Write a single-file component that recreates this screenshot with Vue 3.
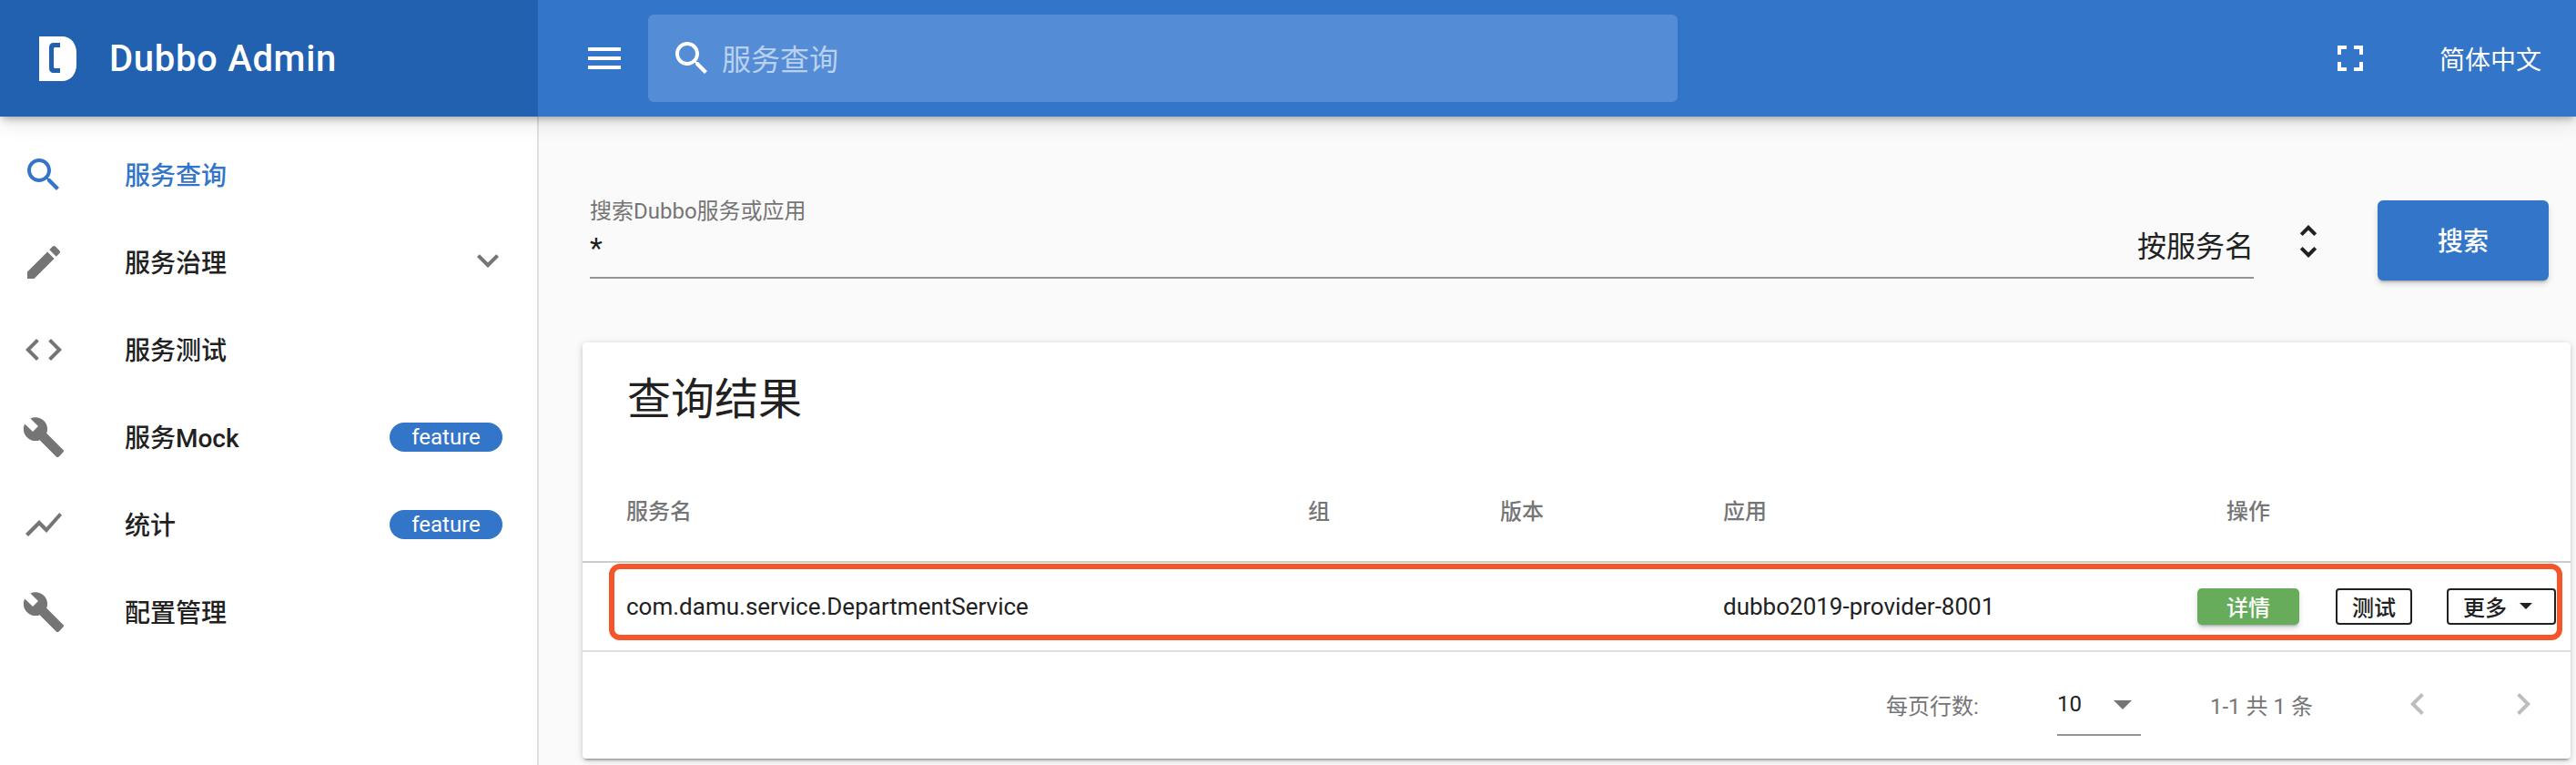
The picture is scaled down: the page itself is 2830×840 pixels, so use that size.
<script setup>
const icons = {
  search: 'M15.5 14h-.79l-.28-.27C15.41 12.59 16 11.11 16 9.5 16 5.91 13.09 3 9.5 3S3 5.91 3 9.5 5.91 16 9.5 16c1.61 0 3.09-.59 4.23-1.57l.27.28v.79l5 4.99L20.49 19l-4.99-5zm-6 0C7.01 14 5 11.99 5 9.5S7.01 5 9.5 5 14 7.01 14 9.5 11.99 14 9.5 14z',
  edit: 'M3 17.25V21h3.75L17.81 9.94l-3.75-3.75L3 17.25zM20.71 7.04c.39-.39.39-1.02 0-1.41l-2.34-2.34c-.39-.39-1.02-.39-1.41 0l-1.83 1.83 3.75 3.75 1.83-1.83z',
  code: 'M9.4 16.6L4.8 12l4.6-4.6L8 6l-6 6 6 6 1.4-1.4zm5.2 0l4.6-4.6-4.6-4.6L16 6l6 6-6 6-1.4-1.4z',
  build: 'M22.7 19l-9.1-9.1c.9-2.3.4-5-1.5-6.9-2-2-5-2.4-7.4-1.3L9 6 6 9 1.6 4.7C.4 7.1.9 10.1 2.9 12.1c1.9 1.9 4.6 2.4 6.9 1.5l9.1 9.1c.4.4 1 .4 1.4 0l2.3-2.3c.5-.4.5-1.1.1-1.4z',
  chart: 'M3.5 18.49l6-6.01 4 4L22 6.92l-1.41-1.41-7.09 7.97-4-4L2 16.99z',
  more: 'M16.59 8.59L12 13.17 7.41 8.59 6 10l6 6 6-6z',
  menu: 'M3 18h18v-2H3v2zm0-5h18v-2H3v2zm0-7v2h18V6H3z',
  full: 'M7 14H5v5h5v-2H7v-3zm-2-4h2V7h3V5H5v5zm12 7h-3v2h5v-5h-2v3zM14 5v2h3v3h2V5h-5z',
  unfold: 'M12 5.83L15.17 9l1.41-1.41L12 3 7.41 7.59 8.83 9 12 5.83zm0 12.34L8.83 15l-1.41 1.41L12 21l4.59-4.59L15.17 15 12 18.17z',
  left: 'M15.41 7.41L14 6l-6 6 6 6 1.41-1.41L10.83 12z',
  right: 'M10 6L8.59 7.41 13.17 12l-4.58 4.59L10 18l6-6z',
  drop: 'M7 10l5 5 5-5z'
}
const items = [
  { icon: 'search', label: '服务查询', active: true },
  { icon: 'edit', label: '服务治理', expand: true },
  { icon: 'code', label: '服务测试' },
  { icon: 'build', label: '服务Mock', badge: 'feature' },
  { icon: 'chart', label: '统计', badge: 'feature' },
  { icon: 'build', label: '配置管理' }
]
</script>

<template>
  <div class="page">
    <header class="topbar">
      <div class="brand">
        <svg class="logo" width="41" height="49" viewBox="0 0 41 49">
          <path d="M0 0H25C35 0 41 8 41 18V31C41 41 35 49 25 49H0Z" fill="#fff" />
          <path d="M23 7H16C12 7 11 9.500 11 13V34C11 37.500 12 40 16 40H23V35H18C16.500 35 16 34.500 16 33V14C16 12.500 16.500 12 18 12H23Z" fill="#2260b0" />
        </svg>
        <span class="brand-name">Dubbo Admin</span>
      </div>
      <svg class="icon menu-icon" viewBox="0 0 24 24"><path :d="icons.menu" /></svg>
      <div class="top-search">
        <svg class="icon" viewBox="0 0 24 24"><path :d="icons.search" /></svg>
        <span class="top-search-text">服务查询</span>
      </div>
      <div class="top-right">
        <svg class="icon" viewBox="0 0 24 24"><path :d="icons.full" /></svg>
        <span class="lang">简体中文</span>
      </div>
    </header>

    <div class="body">
      <nav class="sidebar">
        <div v-for="item in items" :key="item.label + item.icon" class="nav-item" :class="{ active: item.active }">
          <svg class="icon" viewBox="0 0 24 24"><path :d="icons[item.icon]" /></svg>
          <span class="nav-label">{{ item.label }}</span>
          <svg v-if="item.expand" class="icon nav-expand" viewBox="0 0 24 24"><path :d="icons.more" /></svg>
          <span v-if="item.badge" class="badge">{{ item.badge }}</span>
        </div>
      </nav>

      <main class="main">
        <section class="search-row">
          <div class="field">
            <div class="field-label">搜索Dubbo服务或应用</div>
            <div class="field-line">
              <span class="field-value">*</span>
              <span class="field-select">按服务名</span>
            </div>
          </div>
          <svg class="icon unfold" viewBox="0 0 24 24"><path :d="icons.unfold" /></svg>
          <button class="search-btn">搜索</button>
        </section>

        <section class="card">
          <h2 class="card-title">查询结果</h2>
          <div class="grid thead">
            <span>服务名</span>
            <span>组</span>
            <span>版本</span>
            <span>应用</span>
            <span class="th-action">操作</span>
          </div>
          <div class="grid trow">
            <span>com.damu.service.DepartmentService</span>
            <span></span>
            <span></span>
            <span>dubbo2019-provider-8001</span>
            <div class="actions">
              <button class="btn-detail">详情</button>
              <button class="btn-outline btn-test">测试</button>
              <button class="btn-outline btn-more">更多<i class="caret"></i></button>
            </div>
            <div class="highlight"></div>
          </div>
          <div class="tfoot">
            <span class="per-page">每页行数:</span>
            <div class="page-select">
              <span>10</span>
              <svg class="icon" viewBox="0 0 24 24"><path :d="icons.drop" /></svg>
            </div>
            <span class="range">1-1 共 1 条</span>
            <svg class="icon pager-left" viewBox="0 0 24 24"><path :d="icons.left" /></svg>
            <svg class="icon pager-right" viewBox="0 0 24 24"><path :d="icons.right" /></svg>
          </div>
        </section>
      </main>
    </div>
  </div>
</template>

<style>
html, body { margin: 0; padding: 0; background: #fafafa; }
</style>

<style scoped>
.page {
  width: 2830px;
  height: 840px;
  overflow: hidden;
  display: flex;
  flex-direction: column;
  background: #fafafa;
  font-family: Roboto, "Noto Sans CJK SC", sans-serif;
  color: #212121;
}
.icon { width: 48px; height: 48px; flex: none; display: block; fill: currentColor; }

.topbar {
  height: 128px;
  flex: none;
  display: flex;
  align-items: center;
  background: #3375c9;
  color: #fff;
  position: relative;
  z-index: 2;
  box-shadow: 0 4px 8px -2px rgba(0,0,0,.3), 0 8px 20px 0 rgba(0,0,0,.1);
}
.brand {
  width: 591px;
  height: 128px;
  flex: none;
  display: flex;
  align-items: center;
  padding-left: 43px;
  box-sizing: border-box;
  background: #2260b0;
}
.logo { flex: none; }
.brand-name { margin-left: 36px; font-size: 40px; font-weight: 500; letter-spacing: .7px; white-space: nowrap; }
.menu-icon { margin-left: 49px; }
.top-search {
  margin-left: 24px;
  width: 1131px;
  height: 96px;
  border-radius: 6px;
  background: #548dd6;
  display: flex;
  align-items: center;
  padding-left: 24px;
  box-sizing: border-box;
}
.top-search-text { margin: 0 0 3px 9px; font-size: 32px; color: rgba(255,255,255,.6); }
.top-right { margin-left: auto; display: flex; align-items: center; padding-right: 38px; }
.lang { margin-left: 74px; font-size: 28px; }

.body { flex: 1; display: flex; min-height: 0; }
.sidebar {
  width: 592px;
  flex: none;
  box-sizing: border-box;
  background: #fff;
  border-right: 2px solid #e0e0e0;
  padding-top: 16px;
}
.nav-item {
  height: 96px;
  display: flex;
  align-items: center;
  padding-left: 24px;
  color: #757575;
}
.nav-item.active { color: #3375c9; }
.nav-label { margin: 0 0 3px 65px; font-size: 28px; font-weight: 500; color: #212121; white-space: nowrap; }
.nav-item.active .nav-label { color: #3375c9; }
.nav-expand { margin-left: auto; margin-right: 30px; margin-top: -4px; }
.badge {
  margin-left: auto;
  margin-right: 38px;
  width: 124px;
  height: 32px;
  border-radius: 16px;
  background: #3375c9;
  color: #fff;
  font-size: 24px;
  line-height: 32px;
  text-align: center;
}

.main { flex: 1; min-width: 0; }
.search-row {
  display: flex;
  align-items: flex-start;
  padding: 92px 30px 0 56px;
}
.field { width: 1828px; flex: none; height: 84px; border-bottom: 2px solid #949494; display: flex; flex-direction: column; }
.field-label { font-size: 24px; line-height: 24px; color: #757575; white-space: nowrap; }
.field-line { display: flex; justify-content: space-between; align-items: center; margin-top: 8px; height: 40px; }
.field-value { font-size: 32px; line-height: 40px; }
.field-select { font-size: 32px; line-height: 40px; margin-bottom: 3px; }
.unfold { margin-left: 36px; margin-top: 21px; color: #212121; }
.search-btn {
  margin-left: auto;
  width: 188px;
  height: 88px;
  border: none;
  border-radius: 6px;
  background: #3375c9;
  color: #fff;
  font: 500 28px Roboto, "Noto Sans CJK SC", sans-serif;
  padding: 0 0 3px;
  box-shadow: 0 3px 3px -2px rgba(0,0,0,.3), 0 4px 6px 0 rgba(0,0,0,.14);
}

.card {
  margin: 68px 0 0 48px;
  width: 2184px;
  height: 457px;
  background: #fff;
  border-radius: 4px;
  display: flex;
  flex-direction: column;
  box-shadow: 0 3px 3px -2px rgba(0,0,0,.4), 0 2px 6px 0 rgba(0,0,0,.14), 0 1px 10px 0 rgba(0,0,0,.08);
}
.card-title {
  margin: 0;
  height: 126px;
  line-height: 126px;
  padding-left: 49px;
  font-size: 48px;
  font-weight: 400;
  color: #212121;
  flex: none;
}
.grid {
  display: grid;
  grid-template-columns: 749px 211px 245px 521px 1fr;
  padding-left: 48px;
  align-items: center;
  position: relative;
}
.thead {
  height: 116px;
  box-sizing: border-box;
  border-bottom: 2px solid #cccccc;
  font-size: 24px;
  font-weight: 500;
  color: #757575;
  flex: none;
}
.th-action { width: 112px; text-align: center; }
.trow {
  height: 98px;
  box-sizing: border-box;
  border-bottom: 2px solid #e0e0e0;
  font-size: 26px;
  flex: none;
  white-space: nowrap;
}
.actions { display: flex; align-items: center; }
.actions button { height: 40px; box-sizing: border-box; font: 500 24px Roboto, "Noto Sans CJK SC", sans-serif; padding: 0 0 2px; }
.btn-detail {
  width: 112px;
  border: none;
  border-radius: 5px;
  background: #67ac5b;
  color: #fff;
  box-shadow: 0 3px 3px -2px rgba(0,0,0,.3), 0 4px 6px 0 rgba(0,0,0,.14);
}
.btn-outline {
  border: 2px solid #212121;
  border-radius: 4px;
  background: #fff;
  color: #212121;
}
.btn-test { width: 84px; margin-left: 40px; }
.actions .btn-more { width: 120px; margin-left: 38px; display: flex; align-items: center; padding-left: 16px; }
.caret {
  margin-left: 14px;
  width: 0;
  height: 0;
  border-left: 7.5px solid transparent;
  border-right: 7.5px solid transparent;
  border-top: 7px solid #212121;
}
.highlight {
  position: absolute;
  left: 29px;
  right: 9px;
  top: 1px;
  height: 84px;
  box-sizing: border-box;
  border: 6px solid #f4562a;
  border-radius: 12px;
  pointer-events: none;
}
.tfoot {
  flex: 1;
  display: flex;
  align-items: center;
  font-size: 24px;
  color: #757575;
  padding-bottom: 3px;
  padding-left: 1432px;
  white-space: nowrap;
}
.per-page { width: 188px; }
.page-select {
  width: 92px;
  height: 69px;
  margin-top: 1px;
  box-sizing: border-box;
  border-bottom: 2px solid #949494;
  display: flex;
  align-items: center;
  justify-content: space-between;
  color: #212121;
}
.page-select .icon { color: #757575; margin-right: -4px; }
.range { margin-left: 76px; width: 204px; }
.pager-left, .pager-right { color: #bdbdbd; }
.pager-right { margin-left: 68px; }
</style>
